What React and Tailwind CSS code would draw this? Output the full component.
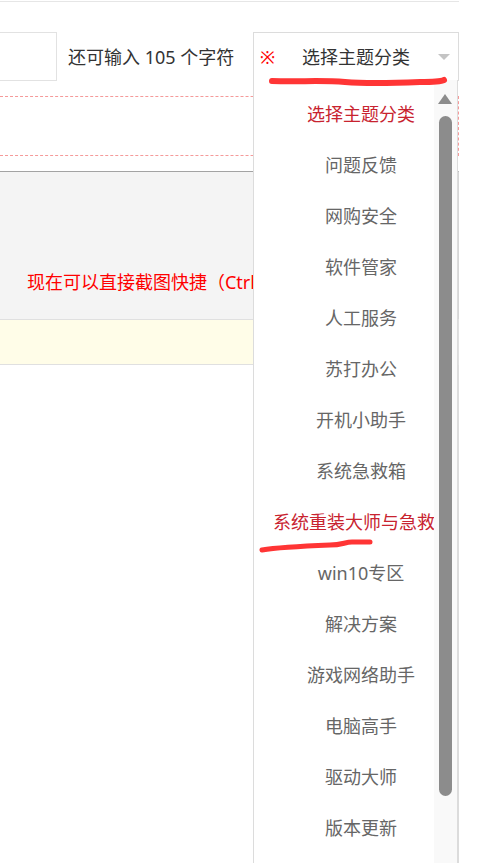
const items = [
  { label: "选择主题分类", active: true },
  { label: "问题反馈" },
  { label: "网购安全" },
  { label: "软件管家" },
  { label: "人工服务" },
  { label: "苏打办公" },
  { label: "开机小助手" },
  { label: "系统急救箱" },
  { label: "系统重装大师与急救", active: true, wide: true },
  { label: "win10专区" },
  { label: "解决方案" },
  { label: "游戏网络助手" },
  { label: "电脑高手" },
  { label: "驱动大师" },
  { label: "版本更新" },
];

export default function App() {
  return (
    <div
      className="relative w-[495px] h-[863px] overflow-hidden bg-white"
      style={{ fontFamily: '"Noto Sans", "Noto Sans CJK SC", sans-serif' }}
    >
      <div className="w-[459px] h-full mt-px border-t border-[#e6e6e6]">
        {/* input row */}
        <div className="flex items-center h-[49px] mt-[30px]">
          <div className="w-[57px] h-full border-y border-r border-[#e2e2e2]" />
          <span className="ml-[11px] text-[18px] leading-6 text-[#333]">还可输入 105 个字符</span>
          <div className="ml-auto w-[206px] h-full border border-[#dcdcdc] flex items-center pl-[6px] pr-[8px]">
            <span className="text-[#ff0000] text-[18px] leading-6">※</span>
            <span className="ml-[27px] text-[18px] leading-6 text-[#333]">选择主题分类</span>
            <span className="ml-auto w-0 h-0 border-x-[6px] border-x-transparent border-t-[6px] border-t-[#c4c4c4]" />
          </div>
        </div>

        {/* dashed box */}
        <div className="mt-[15px] h-[60px] border-y border-r border-dashed border-[#f59a9a]" />

        {/* grey panel */}
        <div className="mt-[15px] h-[148px] bg-[#f4f4f4] border-t border-[#a3a3a3] border-r border-r-[#d6d6d6] pt-[98px] pl-[27px]">
          <span className="text-[18px] leading-6 text-[#ff0000] whitespace-nowrap">现在可以直接截图快捷（Ctrl+Alt+A）</span>
        </div>

        {/* yellow tip */}
        <div className="h-[46px] bg-[#fffde8] border-y border-r border-[#e0e0e0]" />
        <div className="h-[500px] border-r border-[#dcdcdc]" />
      </div>

      {/* dropdown */}
      <div className="absolute left-[253px] top-[80px] w-[205px] bottom-0 bg-white border-x border-[#dcdcdc]">
        <div className="pt-[9px] pl-[19px] w-[195px]">
          {items.map((it) => (
            <div
              key={it.label}
              className={`h-[51px] flex items-center ${it.wide ? "justify-start" : "justify-center"} text-[18px] whitespace-nowrap ${
                it.active ? "text-[#c8232f]" : "text-[#666]"
              }`}
            >
              {it.label}
            </div>
          ))}
        </div>
        {/* scrollbar */}
        <div className="absolute top-0 bottom-0 right-0 w-[23px] bg-[#f9f9f9]">
          <div className="ml-[4px] mt-[14px] w-0 h-0 border-x-[7px] border-x-transparent border-b-[10px] border-b-[#8c8c8c]" />
          <div className="ml-[5px] mt-[12px] w-[13px] h-[680px] rounded-full bg-[#8c8c8c]" />
        </div>
      </div>

      {/* red marker scribbles */}
      <svg className="absolute left-0 top-0 pointer-events-none" width="495" height="863">
        <path
          d="M272 81 C 300 82, 320 80, 345 82 C 370 84, 395 83, 420 82 C 432 82, 440 82, 444 80"
          stroke="#ff3535"
          strokeWidth="6"
          strokeLinecap="round"
          fill="none"
        />
        <path
          d="M262 550 C 280 547, 305 546, 330 545 C 342 545, 345 542, 352 542 C 360 542, 366 542, 370 542"
          stroke="#ff3535"
          strokeWidth="5"
          strokeLinecap="round"
          fill="none"
        />
      </svg>
    </div>
  );
}
